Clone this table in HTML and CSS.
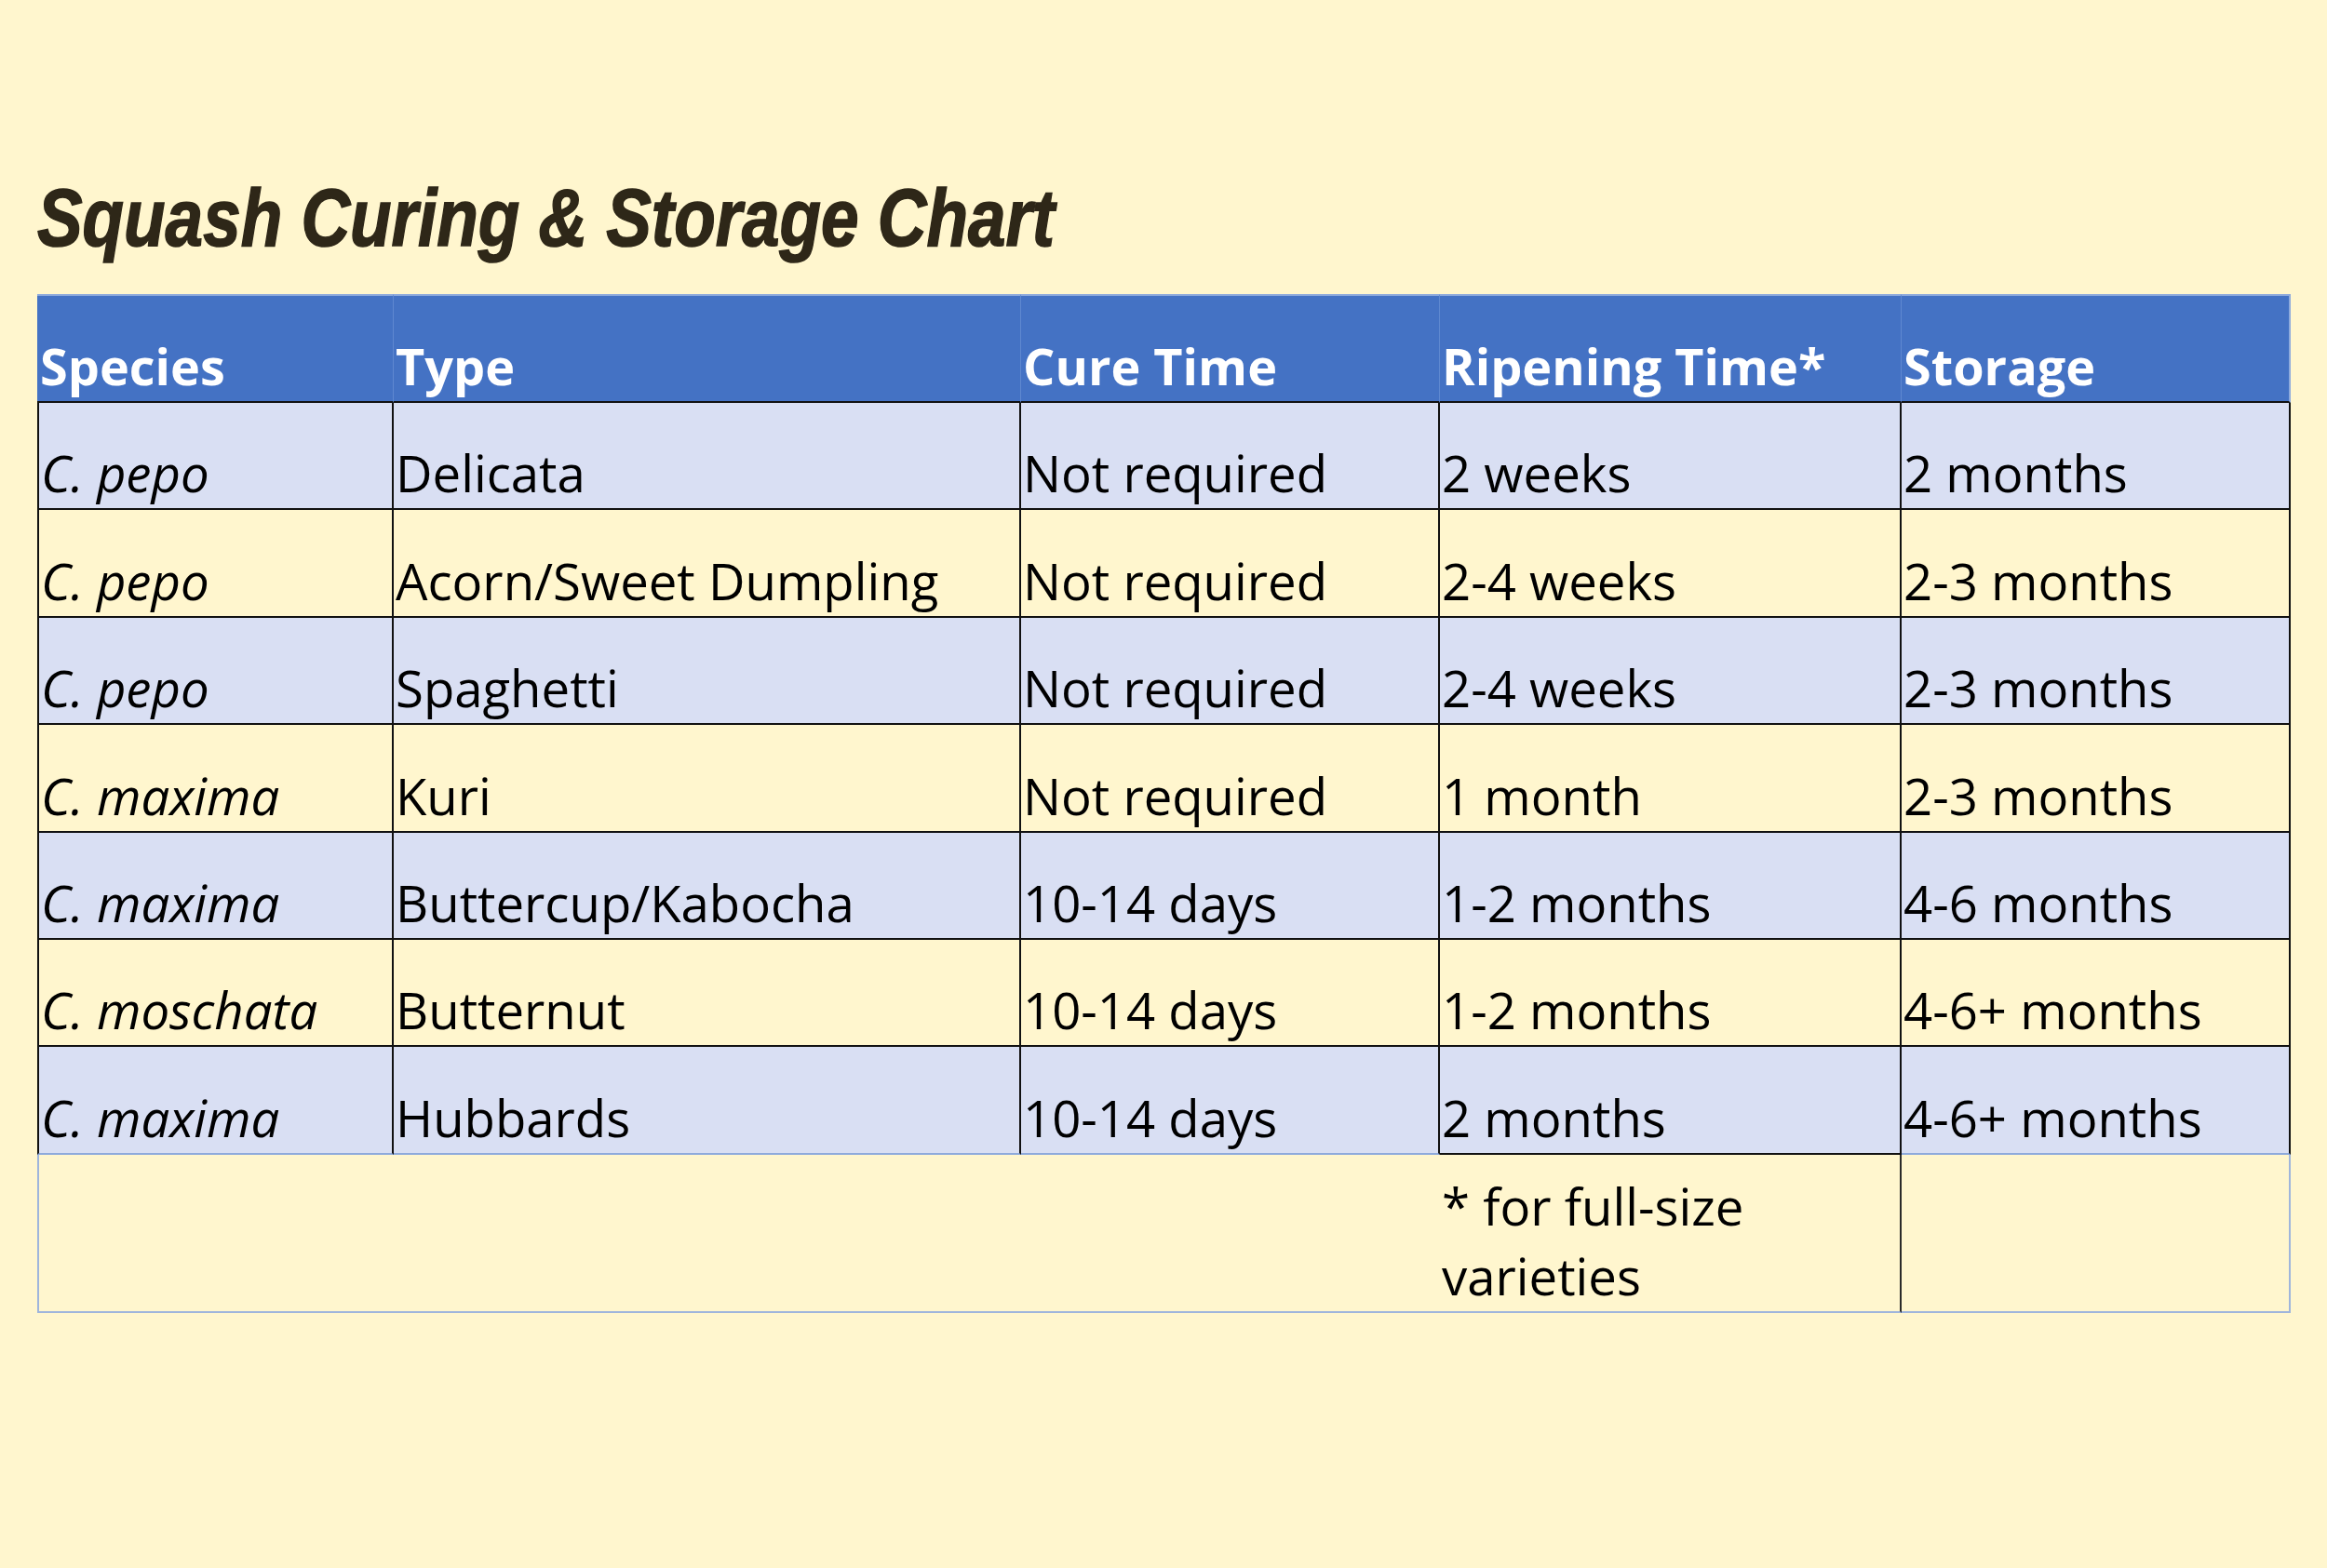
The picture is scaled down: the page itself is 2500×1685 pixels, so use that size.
FILE: index.html
```html
<!DOCTYPE html>
<html lang="en">
<head>
<meta charset="utf-8">
<title>Squash Curing &amp; Storage Chart</title>
<link rel="stylesheet" href="styles.css">
</head>
<body>
<div class="page">
  <h1 class="title"><span class="title-text">Squash Curing &amp; Storage Chart</span></h1>
  <div class="chart">
    <div class="cell head c1">Species</div>
    <div class="cell head">Type</div>
    <div class="cell head">Cure Time</div>
    <div class="cell head">Ripening Time*</div>
    <div class="cell head c5">Storage</div>

    <div class="cell shade c1 sp">C. pepo</div>
    <div class="cell shade">Delicata</div>
    <div class="cell shade">Not required</div>
    <div class="cell shade">2 weeks</div>
    <div class="cell shade">2 months</div>

    <div class="cell c1 sp">C. pepo</div>
    <div class="cell">Acorn/Sweet Dumpling</div>
    <div class="cell">Not required</div>
    <div class="cell">2-4 weeks</div>
    <div class="cell">2-3 months</div>

    <div class="cell shade c1 sp">C. pepo</div>
    <div class="cell shade">Spaghetti</div>
    <div class="cell shade">Not required</div>
    <div class="cell shade">2-4 weeks</div>
    <div class="cell shade">2-3 months</div>

    <div class="cell c1 sp">C. maxima</div>
    <div class="cell">Kuri</div>
    <div class="cell">Not required</div>
    <div class="cell">1 month</div>
    <div class="cell">2-3 months</div>

    <div class="cell shade c1 sp">C. maxima</div>
    <div class="cell shade">Buttercup/Kabocha</div>
    <div class="cell shade">10-14 days</div>
    <div class="cell shade">1-2 months</div>
    <div class="cell shade">4-6 months</div>

    <div class="cell c1 sp">C. moschata</div>
    <div class="cell">Butternut</div>
    <div class="cell">10-14 days</div>
    <div class="cell">1-2 months</div>
    <div class="cell">4-6+ months</div>

    <div class="cell shade c1 sp lastrow">C. maxima</div>
    <div class="cell shade lastrow">Hubbards</div>
    <div class="cell shade lastrow">10-14 days</div>
    <div class="cell shade lastrow dark">2 months</div>
    <div class="cell shade lastrow">4-6+ months</div>

    <div class="cell foot span3"></div>
    <div class="cell foot note">* for full-size varieties</div>
    <div class="cell foot fend"></div>
  </div>
</div>
</body>
</html>
```

FILE: styles.css
```css
* {
  box-sizing: border-box;
}

html, body {
  margin: 0;
  padding: 0;
  background: #fff6ce;
}

.page {
  width: 2500px;
  height: 1685px;
  padding: 190px 0 0 40px;
}

.title {
  margin: 0 0 39px 0;
  height: 87px;
  font-family: "Liberation Sans", Arial, sans-serif;
  font-weight: 700;
  font-style: italic;
  font-size: 88px;
  line-height: 87px;
  color: #2e2718;
  white-space: nowrap;
}

.title-text {
  display: inline-block;
  transform: scaleX(0.828);
  transform-origin: left center;
  -webkit-text-stroke: 1.6px #2e2718;
}

.chart {
  display: grid;
  grid-template-columns: 383px 674px 450px 496px 418px;
  grid-template-rows: 117px repeat(7, 115.4px) 170px;
  font-family: "Open Sans", "Noto Sans", sans-serif;
  font-size: 54.5px;
  line-height: 75px;
  color: #000;
}

.cell {
  display: flex;
  align-items: flex-end;
  padding: 0 0 0 2px;
  border-right: 2px solid #111;
  border-bottom: 2px solid #111;
  white-space: nowrap;
}

.c1 {
  border-left: 2px solid #111;
}

.shade {
  background: #d9dff3;
}

.sp {
  font-style: italic;
}

.head {
  background: #4472c4;
  color: #fff;
  font-weight: 700;
  font-size: 54px;
  border-top: 2px solid #8eaadc;
  border-right: 1px solid #5f88d0;
  border-bottom: 2px solid #111;
}

.head.c1 {
  border-left: 0;
  padding-left: 3px;
}

.head.c5 {
  border-right: 2px solid #8eaadc;
}

.lastrow {
  border-bottom-color: #8eaadc;
}

.lastrow.dark {
  border-bottom-color: #111;
}

.foot {
  border-right: 0;
  border-bottom: 2px solid #9fb5dc;
}

.span3 {
  grid-column: span 3;
  border-left: 2px solid #9fb5dc;
}

.note {
  white-space: normal;
  border-right: 2px solid #2a2a2a;
}

.fend {
  border-right: 2px solid #9fb5dc;
}
```
